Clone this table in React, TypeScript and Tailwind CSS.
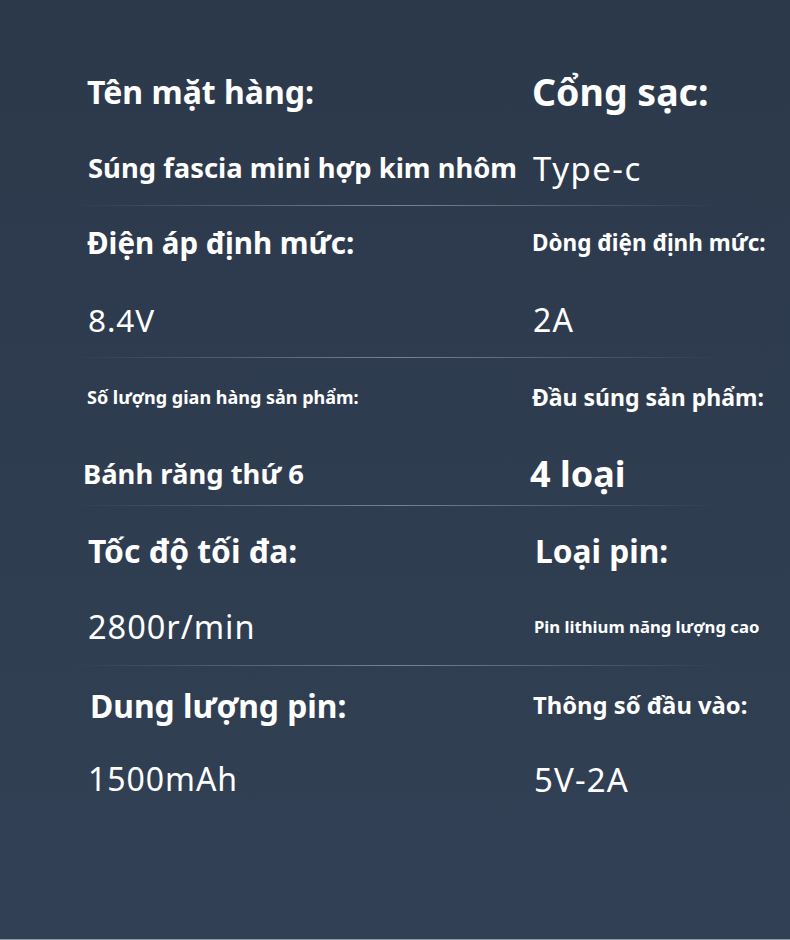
type Cell = { label: string; labelCls: string; value: string; valueCls: string }
type Section = { labelRow: string; valueRow: string; pad: string; left: Cell; right: Cell }

const bold = 'font-bold'
const thin = 'font-normal'

const sections: Section[] = [
  {
    labelRow: 'h-[74px]', valueRow: 'mt-[9px] h-[60px]', pad: 'pb-[7px]',
    left: { label: 'Tên mặt hàng:', labelCls: `text-[32px] ${bold}`, value: 'Súng fascia mini hợp kim nhôm', valueCls: `text-[27.4px] ${bold} ml-px` },
    right: { label: 'Cổng sạc:', labelCls: `text-[37.5px] ${bold}`, value: 'Type-c', valueCls: `text-[33px] ${thin} tracking-[0.045em] ml-px` },
  },
  {
    labelRow: 'h-[74px]', valueRow: 'mt-[10px] h-[60px]', pad: 'pb-[7px]',
    left: { label: 'Điện áp định mức:', labelCls: `text-[29.5px] ${bold}`, value: '8.4V', valueCls: `text-[31.5px] ${thin} tracking-[0.03em] ml-px` },
    right: { label: 'Dòng điện định mức:', labelCls: `text-[22.5px] ${bold}`, value: '2A', valueCls: `text-[32px] ${thin} tracking-[0.04em] ml-px` },
  },
  {
    labelRow: 'h-[78px]', valueRow: 'mt-[8px] h-[60px]', pad: 'pb-px',
    left: { label: 'Số lượng gian hàng sản phẩm:', labelCls: `text-[18px] ${bold}`, value: 'Bánh răng thứ 6', valueCls: `text-[27.4px] ${bold} -ml-1` },
    right: { label: 'Đầu súng sản phẩm:', labelCls: `text-[23px] ${bold}`, value: '4 loại', valueCls: `text-[36px] ${bold} -ml-0.5` },
  },
  {
    labelRow: 'h-[90px]', valueRow: 'mt-px h-[60px]', pad: 'pb-[8px]',
    left: { label: 'Tốc độ tối đa:', labelCls: `text-[31.8px] ${bold} ml-px`, value: '2800r/min', valueCls: `text-[32.5px] ${thin} tracking-[0.03em] ml-px` },
    right: { label: 'Loại pin:', labelCls: `text-[31.7px] ${bold} ml-[3px]`, value: 'Pin lithium năng lượng cao', valueCls: `text-[16.7px] ${bold} ml-0.5` },
  },
  {
    labelRow: 'h-[80px]', valueRow: 'mt-[3px] h-[60px]', pad: 'pb-0',
    left: { label: 'Dung lượng pin:', labelCls: `text-[31.8px] ${bold} ml-[3px]`, value: '1500mAh', valueCls: `text-[32px] ${thin} tracking-[0.03em] ml-px` },
    right: { label: 'Thông số đầu vào:', labelCls: `text-[23.8px] ${bold} ml-px`, value: '5V-2A', valueCls: `text-[33px] ${thin} tracking-[0.035em] ml-0.5` },
  },
]

function Divider() {
  return <div className="ml-[73px] w-[648px] h-px bg-gradient-to-r from-transparent via-[#74839a] to-transparent" />
}

function Column({ cell, s }: { cell: Cell; s: Section }) {
  return (
    <div className="flex flex-col whitespace-nowrap leading-none">
      <div className={`flex items-center ${s.labelRow} ${cell.labelCls}`}>{cell.label}</div>
      <div className={`flex items-center ${s.valueRow} ${cell.valueCls}`}>{cell.value}</div>
    </div>
  )
}

export default function App() {
  return (
    <div className="w-[790px] h-[940px] overflow-hidden bg-gradient-to-b from-[#2c394b] to-[#324055] text-white border-b border-[#8a96a6] pt-[55px] font-['Noto_Sans','Open_Sans',sans-serif]">
      {sections.map((s, i) => (
        <div key={i}>
          <div className={`grid grid-cols-[445px_1fr] pl-[87px] ${s.pad}`}>
            <Column cell={s.left} s={s} />
            <Column cell={s.right} s={s} />
          </div>
          {i < sections.length - 1 && <Divider />}
        </div>
      ))}
    </div>
  )
}
